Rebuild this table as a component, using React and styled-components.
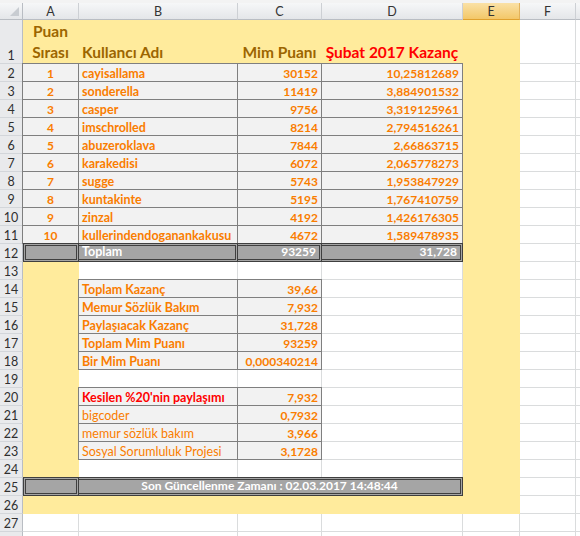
import styled, { createGlobalStyle, css } from 'styled-components';

const GlobalStyle = createGlobalStyle`
  html, body {
    margin: 0;
    padding: 0;
    background: #fff;
    overflow: hidden;
  }
`;

const COLS = [
  { key: 'A', width: 56 },
  { key: 'B', width: 159 },
  { key: 'C', width: 84 },
  { key: 'D', width: 141 },
  { key: 'E', width: 57, selected: true },
  { key: 'F', width: 56 },
  { key: 'G', width: 60 },
];

const FONT = 'Lato, "Liberation Sans", sans-serif';

const Window = styled.div`
  width: 580px;
  height: 536px;
  overflow: hidden;
  background: #fff;
  border-top: 3px solid #f3f3f3;
  box-sizing: border-box;
`;

const Sheet = styled.div`
  display: grid;
  grid-template-columns: 23px ${COLS.map((c) => c.width + 'px').join(' ')};
  grid-template-rows: 17px 44px;
  grid-auto-rows: 18px;
  font-family: ${FONT};
`;

const Corner = styled.div`
  position: relative;
  box-sizing: border-box;
  background: linear-gradient(#f6f7f8, #e4e6e9);
  border-right: 1px solid #b9bdc3;
  border-bottom: 1px solid #b9bdc3;

  &::after {
    content: '';
    position: absolute;
    right: 3px;
    bottom: 3px;
    border-style: solid;
    border-width: 0 0 9px 9px;
    border-color: transparent transparent #c8ccd1 transparent;
  }
`;

const ColHead = styled.div`
  box-sizing: border-box;
  display: flex;
  align-items: center;
  justify-content: center;
  font-size: 12.5px;
  color: #333;
  background: ${(p) =>
    p.$selected ? 'linear-gradient(#fae1a6, #f3c768)' : 'linear-gradient(#f6f7f8, #e4e6e9)'};
  border-right: 1px solid ${(p) => (p.$selected ? '#e3b25a' : '#cdd0d4')};
  border-bottom: 1px solid ${(p) => (p.$selected ? '#e0a12e' : '#b9bdc3')};
`;

const RowHead = styled.div`
  box-sizing: border-box;
  display: flex;
  align-items: flex-end;
  justify-content: center;
  font-size: 12.5px;
  line-height: 15px;
  color: #2f2f2f;
  background: #e9eaec;
  border-right: 1px solid #b9bdc3;
  border-bottom: 1px solid #d3d6da;
`;

const kinds = {
  plain: css`
    background: #fff;
    border-right: 1px solid #dadcdd;
    border-bottom: 1px solid #dadcdd;
  `,
  fill: css`
    background: #ffeb9c;
    color: #9c6500;
    border-right: 1px solid #ffeb9c;
    border-bottom: 1px solid #ffeb9c;
  `,
  calc: css`
    background: #f2f2f2;
    color: #fa7d00;
    font-weight: 700;
    border-right: 1px solid #7f7f7f;
    border-bottom: 1px solid #7f7f7f;
  `,
  check: css`
    background: #a5a5a5;
    color: #fff;
    font-weight: 700;
    border: 3px double #3f3f3f;
    border-left-width: ${(p) => (p.$left ? '3px' : '0')};
    margin-top: -1px;
  `,
};

const edgeShadow = (p) => {
  if (p.$kind !== 'calc') return 'none';
  const s = [];
  if (p.$top) s.push('0 -1px 0 #7f7f7f');
  if (p.$left) s.push('-1px 0 0 #7f7f7f');
  if (p.$top && p.$left) s.push('-1px -1px 0 #7f7f7f');
  return s.length ? s.join(', ') : 'none';
};

const justify = { left: 'flex-start', center: 'center', right: 'flex-end' };

const Cell = styled.div`
  box-sizing: border-box;
  display: flex;
  align-items: flex-end;
  justify-content: ${(p) => justify[p.$align || 'left']};
  grid-column: span ${(p) => p.$span || 1};
  padding: 0 3px;
  font-size: ${(p) => (p.$num ? '12px' : '12.5px')};
  line-height: 14px;
  white-space: nowrap;
  ${(p) => kinds[p.$kind]}
  box-shadow: ${edgeShadow};
  ${(p) => p.$red && 'color: #ff0000;'}
  ${(p) => p.$light && 'font-weight: 400;'}
`;

const HeadText = styled.span`
  font-size: 15.5px;
  line-height: 21px;
  font-weight: 700;
  color: ${(p) => (p.$red ? '#ff0000' : '#9c6500')};
  text-align: center;
  white-space: ${(p) => (p.$wrap ? 'normal' : 'nowrap')};
`;

const ranking = [
  ['1', 'cayisallama', '30152', '10,25812689'],
  ['2', 'sonderella', '11419', '3,884901532'],
  ['3', 'casper', '9756', '3,319125961'],
  ['4', 'imschrolled', '8214', '2,794516261'],
  ['5', 'abuzeroklava', '7844', '2,66863715'],
  ['6', 'karakedisi', '6072', '2,065778273'],
  ['7', 'sugge', '5743', '1,953847929'],
  ['8', 'kuntakinte', '5195', '1,767410759'],
  ['9', 'zinzal', '4192', '1,426176305'],
  ['10', 'kullerindendoganankakusu', '4672', '1,589478935'],
];

const summary = [
  ['Toplam Kazanç', '39,66'],
  ['Memur Sözlük Bakım', '7,932'],
  ['Paylaşıacak Kazanç', '31,728'],
  ['Toplam Mim Puanı', '93259'],
  ['Bir Mim Puanı', '0,000340214'],
];

const shares = [
  ["Kesilen %20'nin paylaşımı", '7,932', { red: true }],
  ['bigcoder', '0,7932', { light: true }],
  ['memur sözlük bakım', '3,966', { light: true }],
  ['Sosyal Sorumluluk Projesi', '3,1728', { light: true }],
];

const tail = (n) => [
  <Cell key={`${n}e`} $kind="fill" />,
  <Cell key={`${n}f`} $kind="plain" />,
  <Cell key={`${n}g`} $kind="plain" />,
];

const gapRow = (n) => [
  <Cell key={`${n}a`} $kind="fill" />,
  <Cell key={`${n}b`} $kind="plain" />,
  <Cell key={`${n}c`} $kind="plain" />,
  <Cell key={`${n}d`} $kind="plain" />,
  ...tail(n),
];

const blankRow = (n) => COLS.map((c) => <Cell key={`${n}${c.key}`} $kind="plain" />);

export default function App() {
  const rows = [];

  rows.push([
    <Cell key="1a" $kind="fill" $align="center">
      <HeadText $wrap>Puan Sırası</HeadText>
    </Cell>,
    <Cell key="1b" $kind="fill">
      <HeadText>Kullancı Adı</HeadText>
    </Cell>,
    <Cell key="1c" $kind="fill" $align="center">
      <HeadText>Mim Puanı</HeadText>
    </Cell>,
    <Cell key="1d" $kind="fill" $align="center">
      <HeadText $red>Şubat 2017 Kazanç</HeadText>
    </Cell>,
    ...tail(1),
  ]);

  ranking.forEach(([rank, name, points, earn], i) => {
    const n = i + 2;
    const top = i === 0;
    rows.push([
      <Cell key={`${n}a`} $kind="calc" $align="center" $num $top={top} $left>{rank}</Cell>,
      <Cell key={`${n}b`} $kind="calc" $top={top}>{name}</Cell>,
      <Cell key={`${n}c`} $kind="calc" $align="right" $num $top={top}>{points}</Cell>,
      <Cell key={`${n}d`} $kind="calc" $align="right" $num $top={top}>{earn}</Cell>,
      ...tail(n),
    ]);
  });

  rows.push([
    <Cell key="12a" $kind="check" $left />,
    <Cell key="12b" $kind="check">Toplam</Cell>,
    <Cell key="12c" $kind="check" $align="right" $num>93259</Cell>,
    <Cell key="12d" $kind="check" $align="right" $num>31,728</Cell>,
    ...tail(12),
  ]);

  rows.push(gapRow(13));

  summary.forEach(([label, value], i) => {
    const n = i + 14;
    rows.push([
      <Cell key={`${n}a`} $kind="fill" />,
      <Cell key={`${n}b`} $kind="calc" $top={i === 0} $left>{label}</Cell>,
      <Cell key={`${n}c`} $kind="calc" $align="right" $num $top={i === 0}>{value}</Cell>,
      <Cell key={`${n}d`} $kind="plain" />,
      ...tail(n),
    ]);
  });

  rows.push(gapRow(19));

  shares.forEach(([label, value, opt], i) => {
    const n = i + 20;
    rows.push([
      <Cell key={`${n}a`} $kind="fill" />,
      <Cell key={`${n}b`} $kind="calc" $top={i === 0} $left $red={opt.red} $light={opt.light}>
        {label}
      </Cell>,
      <Cell key={`${n}c`} $kind="calc" $align="right" $num $top={i === 0}>{value}</Cell>,
      <Cell key={`${n}d`} $kind="plain" />,
      ...tail(n),
    ]);
  });

  rows.push(gapRow(24));

  rows.push([
    <Cell key="25a" $kind="check" $left />,
    <Cell key="25b" $kind="check" $span={3} $align="center" $num>
      Son Güncellenme Zamanı : 02.03.2017 14:48:44
    </Cell>,
    ...tail(25),
  ]);

  rows.push([
    <Cell key="26a" $kind="fill" />,
    <Cell key="26b" $kind="fill" />,
    <Cell key="26c" $kind="fill" />,
    <Cell key="26d" $kind="fill" />,
    ...tail(26),
  ]);

  rows.push(blankRow(27));
  rows.push(blankRow(28));

  return (
    <>
      <GlobalStyle />
      <Window>
        <Sheet>
          <Corner />
          {COLS.map((c) => (
            <ColHead key={c.key} $selected={c.selected}>
              {c.key}
            </ColHead>
          ))}
          {rows.map((cells, i) => [
            <RowHead key={`h${i}`}>{i + 1}</RowHead>,
            ...cells,
          ])}
        </Sheet>
      </Window>
    </>
  );
}
